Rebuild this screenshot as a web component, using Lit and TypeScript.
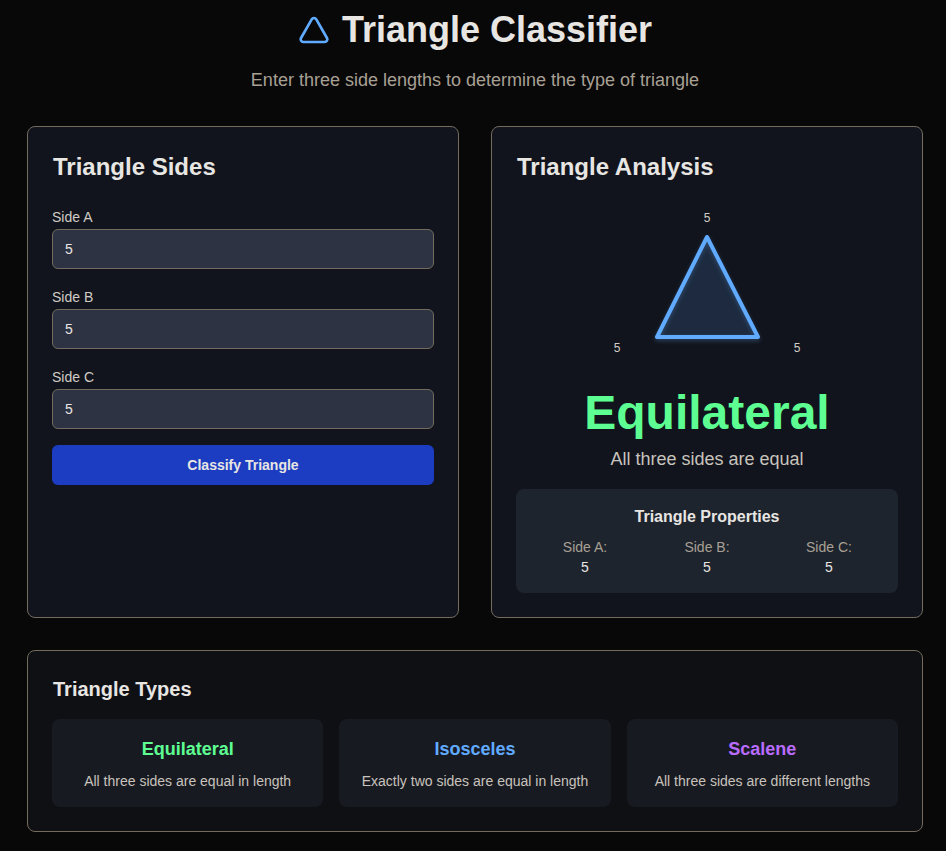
import { LitElement, html, css } from "lit";
import { customElement, state } from "lit/decorators.js";

const TYPES = [
  { name: "Equilateral", cls: "green", text: "All three sides are equal in length" },
  { name: "Isosceles", cls: "blue", text: "Exactly two sides are equal in length" },
  { name: "Scalene", cls: "purple", text: "All three sides are different lengths" },
];

@customElement("app-root")
export class AppRoot extends LitElement {
  @state() private sides = ["5", "5", "5"];

  static styles = css`
    :host {
      display: block;
      box-sizing: border-box;
      min-height: 851px;
      padding: 10px 23px 19px 27px;
      background: #080808;
      color: #e8e6e3;
      font-family: "Liberation Sans", Arial, sans-serif;
      font-size: 14px;
      line-height: 20px;
    }
    * { box-sizing: border-box; }
    h1, h2, h3, h4, p { margin: 0; }
    header { text-align: center; margin-bottom: 32px; }
    h1 {
      display: flex;
      align-items: center;
      justify-content: center;
      gap: 12px;
      margin-bottom: 16px;
      font-size: 36px;
      line-height: 40px;
    }
    .logo { width: 32px; height: 32px; display: block; }
    .sub { font-size: 18px; line-height: 28px; color: #a8a095; }
    .columns { display: grid; grid-template-columns: 1fr 1fr; gap: 32px; margin-bottom: 32px; }
    .card { border: 1px solid #736b5e; border-radius: 8px; padding: 24px; background: #11141c; }
    .card.types { background: #0f1014; }
    h2 { font-size: 24px; line-height: 32px; margin-bottom: 24px; padding-left: 1px; }
    .types h2 { font-size: 20px; line-height: 28px; margin-bottom: 16px; }
    .field { margin-bottom: 18px; }
    .field.last { margin-bottom: 16px; }
    label { display: block; margin: 2px 0; color: #d0ccc6; }
    .field:not(:first-of-type) label { margin-top: 0; }
    .field:first-of-type label { margin-top: 2px; }
    input {
      display: block;
      width: 100%;
      height: 40px;
      padding: 0 12px;
      border: 1px solid #736b5e;
      border-radius: 6px;
      background: #2d3342;
      color: #e8e6e3;
      font: inherit;
      outline: none;
    }
    button {
      display: block;
      width: 100%;
      height: 40px;
      border: 0;
      border-radius: 6px;
      background: #1c3dc2;
      color: #e8e6e3;
      font: bold 14px/20px "Liberation Sans", Arial, sans-serif;
    }
    .analysis { text-align: center; }
    .analysis h2 { text-align: left; }
    .figure { display: block; width: 200px; height: 150px; margin: 0 auto 32px; overflow: visible; }
    .shape {
      fill: rgba(96, 165, 250, 0.13);
      stroke: #60abff;
      stroke-width: 4;
      stroke-linejoin: round;
      filter: drop-shadow(0 2px 2px rgba(96, 165, 250, 0.3));
    }
    .num { fill: #d0ccc6; font-size: 12px; text-anchor: middle; }
    .result { font-size: 48px; line-height: 48px; font-weight: bold; margin-bottom: 8px; }
    .desc { font-size: 18px; line-height: 28px; color: #c8c3bc; margin-bottom: 16px; }
    .props { padding: 16px; border-radius: 8px; background: #1e242d; }
    h4 { font-size: 16px; line-height: 24px; margin-bottom: 8px; }
    .values { display: grid; grid-template-columns: repeat(3, 1fr); gap: 16px; }
    .key { color: #a8a095; }
    .tiles { display: grid; grid-template-columns: repeat(3, 1fr); gap: 16px; }
    .tile { padding: 16px; border-radius: 8px; background: #181a22; text-align: center; color: #c8c3bc; }
    h3 { font-size: 18px; line-height: 28px; margin-bottom: 8px; }
    .green { color: #5eff92; }
    .blue { color: #60abff; }
    .purple { color: #b96cff; }
  `;

  private update_(i: number, e: Event) {
    const v = (e.target as HTMLInputElement).value;
    this.sides = this.sides.map((s, n) => (n === i ? v : s));
  }

  render() {
    const names = ["A", "B", "C"];
    return html`
      <header>
        <h1>
          <svg class="logo" viewBox="0 0 24 24" fill="none" stroke="#60abff" stroke-width="2" stroke-linecap="round" stroke-linejoin="round">
            <path d="M13.73 4a2 2 0 0 0-3.46 0l-8 14A2 2 0 0 0 4 21h16a2 2 0 0 0 1.73-3Z" />
          </svg>
          <span>Triangle Classifier</span>
        </h1>
        <p class="sub">Enter three side lengths to determine the type of triangle</p>
      </header>
      <div class="columns">
        <section class="card">
          <h2>Triangle Sides</h2>
          ${names.map(
            (n, i) => html`<div class="field ${i === 2 ? "last" : ""}">
              <label for="side${n}">Side ${n}</label>
              <input id="side${n}" .value=${this.sides[i]} @input=${(e: Event) => this.update_(i, e)} />
            </div>`
          )}
          <button>Classify Triangle</button>
        </section>
        <section class="card analysis">
          <h2>Triangle Analysis</h2>
          <svg class="figure" viewBox="0 0 200 150">
            <polygon class="shape" points="100,30 50,130 151,130" />
            <text class="num" x="100" y="15">${this.sides[0]}</text>
            <text class="num" x="10" y="145">${this.sides[1]}</text>
            <text class="num" x="190" y="145">${this.sides[2]}</text>
          </svg>
          <div class="result green">Equilateral</div>
          <p class="desc">All three sides are equal</p>
          <div class="props">
            <h4>Triangle Properties</h4>
            <div class="values">
              ${names.map((n, i) => html`<div><div class="key">Side ${n}:</div><div>${this.sides[i]}</div></div>`)}
            </div>
          </div>
        </section>
      </div>
      <section class="card types">
        <h2>Triangle Types</h2>
        <div class="tiles">
          ${TYPES.map((t) => html`<div class="tile"><h3 class=${t.cls}>${t.name}</h3><p>${t.text}</p></div>`)}
        </div>
      </section>
    `;
  }
}
